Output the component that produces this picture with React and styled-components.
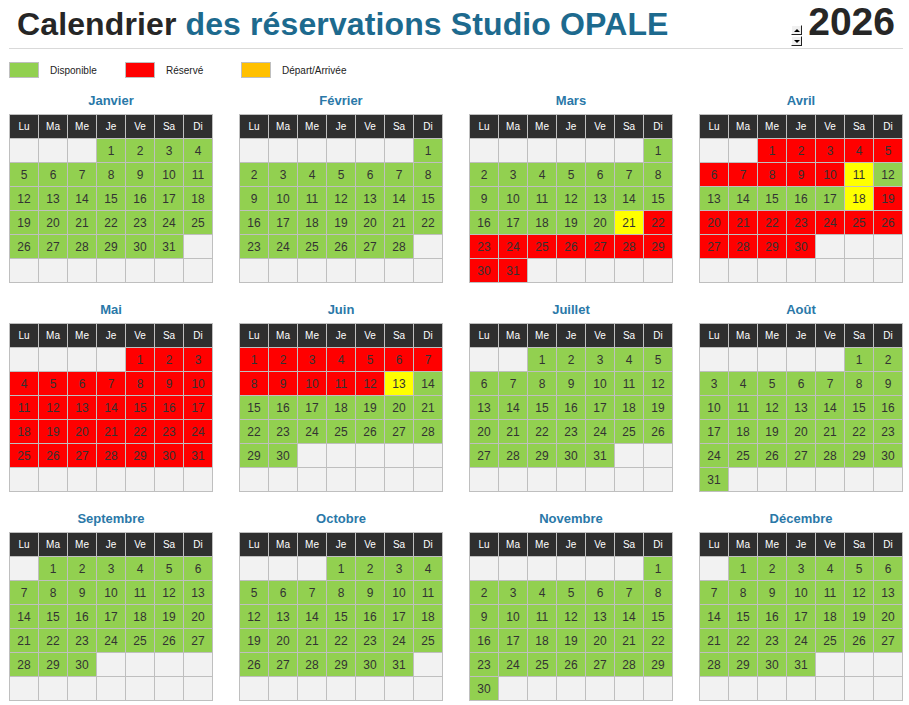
import React from "react";
import styled, { createGlobalStyle } from "styled-components";

const GlobalStyle = createGlobalStyle`
  body {
    margin: 0;
    background: #ffffff;
    font-family: "Liberation Sans", Arial, sans-serif;
  }
`;

const YEAR = 2026;
const MONTHS = [
  "Janvier", "Février", "Mars", "Avril", "Mai", "Juin",
  "Juillet", "Août", "Septembre", "Octobre", "Novembre", "Décembre",
];
const DAYS = ["Lu", "Ma", "Me", "Je", "Ve", "Sa", "Di"];

const COLORS = {
  free: "#92d050",
  booked: "#ff0000",
  swap: "#ffff00",
  empty: "#f2f2f2",
};

function statusOf(m, d) {
  if (m === 2) {
    if (d === 21) return "swap";
    if (d >= 22) return "booked";
  }
  if (m === 3) {
    if (d === 11 || d === 18) return "swap";
    if (d <= 10 || d >= 19) return "booked";
  }
  if (m === 4) return "booked";
  if (m === 5) {
    if (d <= 12) return "booked";
    if (d === 13) return "swap";
  }
  return "free";
}

function buildCells(m) {
  const first = (new Date(YEAR, m, 1).getDay() + 6) % 7;
  const count = new Date(YEAR, m + 1, 0).getDate();
  const cells = [];
  for (let i = 0; i < 42; i++) {
    const d = i - first + 1;
    cells.push(d >= 1 && d <= count ? d : null);
  }
  return cells;
}

export default function App() {
  return (
    <Page>
      <GlobalStyle />
      <TopBar>
        <Title>
          Calendrier <span>des réservations Studio OPALE</span>
        </Title>
        <YearBox>
          <Spinner>
            <SpinButton>
              <Arrow up />
            </SpinButton>
            <SpinButton>
              <Arrow />
            </SpinButton>
          </Spinner>
          <Year>{YEAR}</Year>
        </YearBox>
      </TopBar>

      <Legend>
        <LegendItem>
          <Swatch color="#92d050" />
          Disponible
        </LegendItem>
        <LegendItem>
          <Swatch color="#ff0000" />
          Réservé
        </LegendItem>
        <LegendItem>
          <Swatch color="#ffc000" />
          Départ/Arrivée
        </LegendItem>
      </Legend>

      <Months>
        {MONTHS.map((name, m) => (
          <Month key={name}>
            <MonthName>{name}</MonthName>
            <Grid>
              {DAYS.map((d) => (
                <DayHead key={d}>{d}</DayHead>
              ))}
              {buildCells(m).map((d, i) => (
                <Cell key={i} color={d ? COLORS[statusOf(m, d)] : COLORS.empty}>
                  {d}
                </Cell>
              ))}
            </Grid>
          </Month>
        ))}
      </Months>
    </Page>
  );
}

const Page = styled.div`
  width: 909px;
  padding: 0 6px 0 9px;
  box-sizing: border-box;
`;

const TopBar = styled.div`
  display: flex;
  justify-content: space-between;
  align-items: flex-start;
  height: 48px;
  border-bottom: 1px solid #d9d9d9;
`;

const Title = styled.h1`
  margin: 6px 0 0 8px;
  font-size: 32px;
  font-weight: 700;
  line-height: 36px;
  color: #262626;
  letter-spacing: 0.12px;
  span {
    color: #1d6a8e;
  }
`;

const YearBox = styled.div`
  display: flex;
  align-items: flex-start;
  margin-right: 8px;
`;

const Spinner = styled.div`
  display: flex;
  flex-direction: column;
  gap: 1px;
  margin: 25px 8px 0 0;
`;

const SpinButton = styled.div`
  width: 11px;
  height: 10px;
  box-sizing: border-box;
  background: #f0f0f0;
  border-right: 1px solid #222;
  border-bottom: 1px solid #222;
  border-top: 1px solid #fff;
  border-left: 1px solid #fff;
  display: flex;
  align-items: center;
  justify-content: center;
`;

const Arrow = styled.div`
  width: 0;
  height: 0;
  border-left: 3px solid transparent;
  border-right: 3px solid transparent;
  ${(p) =>
    p.up ? "border-bottom: 3px solid #000;" : "border-top: 3px solid #000;"}
`;

const Year = styled.div`
  font-size: 39px;
  font-weight: 700;
  line-height: 44px;
  color: #262626;
  margin-left: -2px;
`;

const Legend = styled.div`
  display: flex;
  height: 16px;
  margin-top: 13px;
`;

const LegendItem = styled.div`
  display: flex;
  align-items: center;
  gap: 11px;
  width: 116px;
  font-size: 10px;
  color: #222;
`;

const Swatch = styled.div`
  width: 28px;
  height: 14px;
  background: ${(p) => p.color};
  border: 1px solid #bfbfbf;
`;

const Months = styled.div`
  display: grid;
  grid-template-columns: repeat(4, 204px);
  column-gap: 26px;
  row-gap: 16px;
  margin-top: 12px;
`;

const Month = styled.div`
  display: flex;
  flex-direction: column;
`;

const MonthName = styled.div`
  height: 24px;
  line-height: 22px;
  text-align: center;
  font-size: 13px;
  font-weight: 700;
  color: #2a78a8;
`;

const Grid = styled.div`
  display: grid;
  grid-template-columns: repeat(7, 28px);
  grid-auto-rows: 23px;
  gap: 1px;
  padding: 1px;
  background: #bfbfbf;
`;

const DayHead = styled.div`
  background: #2f2f2f;
  color: #fff;
  font-size: 10px;
  display: flex;
  align-items: center;
  justify-content: center;
`;

const Cell = styled.div`
  background: ${(p) => p.color};
  color: #333;
  font-size: 12px;
  display: flex;
  align-items: center;
  justify-content: center;
`;
